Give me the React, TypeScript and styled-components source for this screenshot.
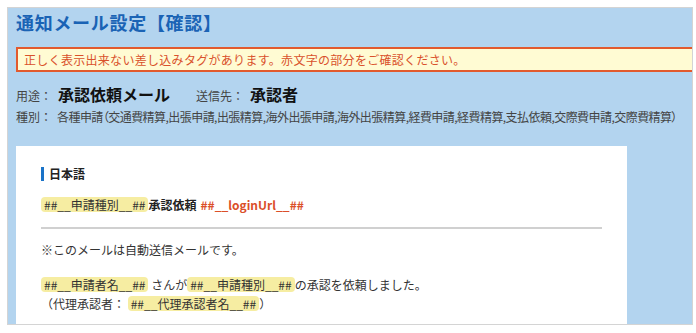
import React from 'react';
import styled, { createGlobalStyle } from 'styled-components';

const GlobalStyle = createGlobalStyle`
    html, body {
        margin: 0;
        padding: 0;
        background: #ffffff;
    }
    body {
        font-family: "Noto Sans CJK JP", "Noto Sans", sans-serif;
        color: #333333;
    }
`;

const Panel = styled.div`
    margin: 7px 0 0 7px;
    width: 676px;
    height: 316px;
    padding: 0 0 0 8px;
    background: #b3d4ef;
    border: 1px solid #d4d4d4;
    overflow: hidden;
`;

const Title = styled.h1`
    margin: 2px 0 0;
    font-size: 18px;
    line-height: 24px;
    letter-spacing: 0.7px;
    font-weight: bold;
    color: #1a63b5;
`;

const Warning = styled.div`
    margin: 13px -4px 0 0;
    height: 21px;
    line-height: 21px;
    padding-left: 6px;
    border: 2px solid #e25a2e;
    background: #fffbd3;
    color: #d9512b;
    font-size: 12px;
    letter-spacing: 0.3px;
`;

const MetaRow = styled.div<{ $top: number }>`
    display: flex;
    align-items: baseline;
    margin-top: ${(p) => p.$top}px;
    font-size: 12px;
    line-height: 18px;
    color: #444;
    white-space: nowrap;
`;

const MetaLabel = styled.span<{ $gap?: number }>`
    margin-right: ${(p) => p.$gap ?? 6}px;
`;

const MetaValue = styled.span<{ $gap?: number }>`
    font-size: 16px;
    font-weight: bold;
    color: #111;
    margin-right: ${(p) => p.$gap ?? 0}px;
`;

const Categories = styled.span`
    letter-spacing: -0.55px;
    font-feature-settings: "palt";
`;

const Card = styled.div`
    margin-top: 20px;
    width: 561px;
    height: 200px;
    padding: 21px 25px 0;
    background: #ffffff;
    font-size: 12px;
    line-height: 19px;
    color: #333;
`;

const LangHeading = styled.div`
    border-left: 3px solid #1a73c8;
    padding-left: 5px;
    line-height: 14px;
    font-weight: bold;
    color: #222;
`;

const SubjectLine = styled.div`
    margin-top: 14px;
    font-weight: bold;
    color: #222;
`;

const Tag = styled.span`
    display: inline-block;
    padding: 0 3px;
    line-height: 15px;
    border-radius: 4px;
    background: #f6eda2;
    font-weight: normal;
    color: #333;
`;

const BadTag = styled.span`
    margin-left: 4px;
    color: #db4f29;
`;

const Divider = styled.hr`
    margin: 13px 0 11px;
    border: none;
    border-top: 2px solid #d0d0d0;
`;

const Paragraph = styled.p<{ $top?: number }>`
    margin: ${(p) => p.$top ?? 0}px 0 0;
`;

export default function App() {
    return (
        <>
            <GlobalStyle />
            <Panel>
                <Title>通知メール設定【確認】</Title>
                <Warning>
                    正しく表示出来ない差し込みタグがあります。赤文字の部分をご確認ください。
                </Warning>
                <MetaRow $top={13}>
                    <MetaLabel>用途：</MetaLabel>
                    <MetaValue $gap={26}>承認依頼メール</MetaValue>
                    <MetaLabel>送信先：</MetaLabel>
                    <MetaValue>承認者</MetaValue>
                </MetaRow>
                <MetaRow $top={3}>
                    <MetaLabel $gap={5}>種別：</MetaLabel>
                    <Categories>
                        各種申請（交通費精算,出張申請,出張精算,海外出張申請,海外出張精算,経費申請,経費精算,支払依頼,交際費申請,交際費精算）
                    </Categories>
                </MetaRow>
                <Card>
                    <LangHeading>日本語</LangHeading>
                    <SubjectLine>
                        <Tag>##__申請種別__##</Tag>承認依頼
                        <BadTag>##__loginUrl__##</BadTag>
                    </SubjectLine>
                    <Divider />
                    <Paragraph>※このメールは自動送信メールです。</Paragraph>
                    <Paragraph $top={16}>
                        <Tag>##__申請者名__##</Tag> さんが
                        <Tag>##__申請種別__##</Tag>の承認を依頼しました。
                    </Paragraph>
                    <Paragraph>
                        （代理承認者： <Tag>##__代理承認者名__##</Tag>）
                    </Paragraph>
                </Card>
            </Panel>
        </>
    );
}
